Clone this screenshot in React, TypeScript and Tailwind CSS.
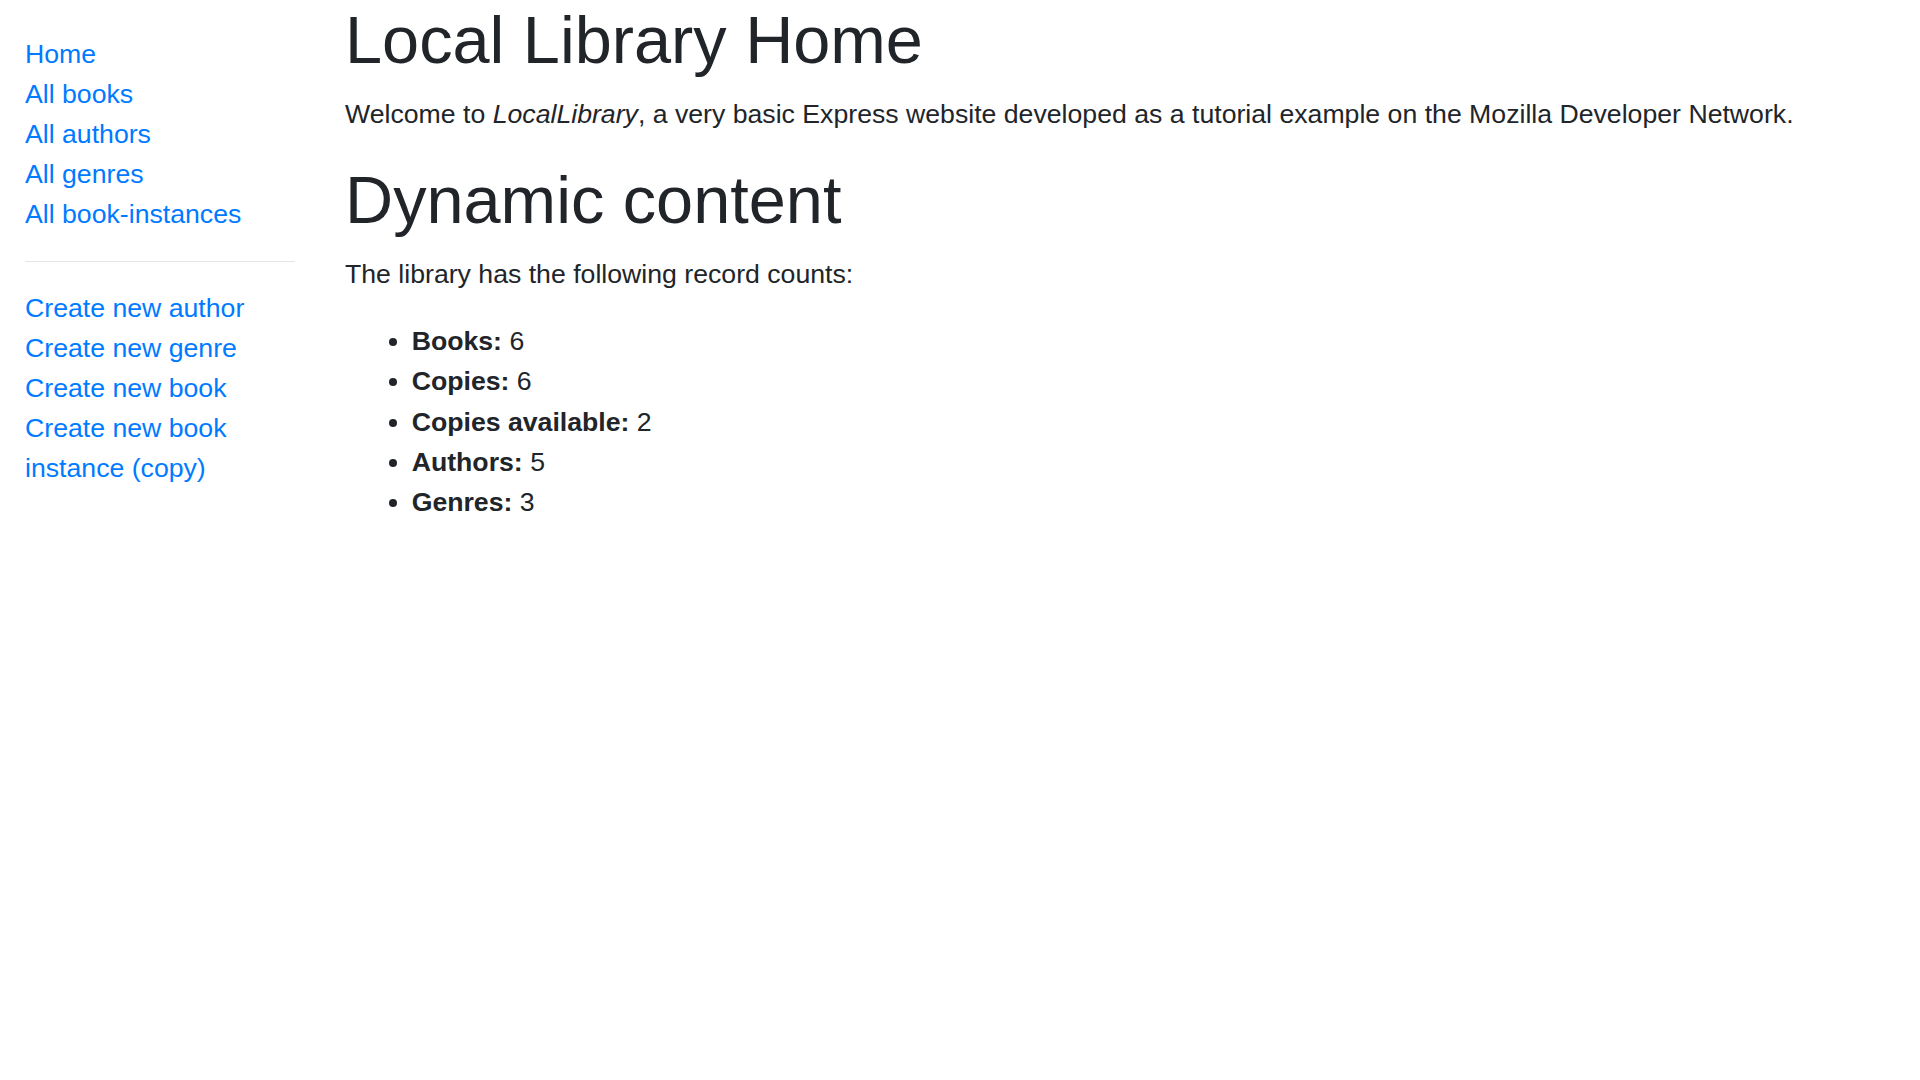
import React from "react";

const navTop = ["Home", "All books", "All authors", "All genres", "All book-instances"];
const navBottom = ["Create new author", "Create new genre", "Create new book", "Create new book instance (copy)"];
const counts: [string, number][] = [
  ["Books:", 6],
  ["Copies:", 6],
  ["Copies available:", 2],
  ["Authors:", 5],
  ["Genres:", 3],
];

export default function App() {
  return (
    <div className="min-h-[1080px] w-[1920px] bg-white text-[#212529] text-[26.67px] leading-[40px] font-['Liberation_Sans',Arial,sans-serif]">
      <div className="flex">
        <div className="w-[320px] shrink-0 px-[25px]">
          <ul className="mt-[34px] list-none p-0">
            {navTop.map((t) => (
              <li key={t}>
                <a href="#" className="text-[#007bff]">{t}</a>
              </li>
            ))}
            <li>
              <hr className="my-[26.67px] border-0 border-t-[1.67px] border-t-[rgba(0,0,0,0.1)]" />
            </li>
            {navBottom.map((t) => (
              <li key={t}>
                <a href="#" className="text-[#007bff]">{t}</a>
              </li>
            ))}
          </ul>
        </div>
        <div className="flex-1 px-[25px]">
          <h1 className="text-[66.67px] leading-[80px] font-medium mb-[13.33px]">Local Library Home</h1>
          <p className="mb-[26.67px] pt-[1px]">
            Welcome to <em>LocalLibrary</em>, a very basic Express website developed as a tutorial example on the Mozilla Developer Network.
          </p>
          <h1 className="text-[66.67px] leading-[80px] font-medium mb-[13.33px] -mt-[1px]">Dynamic content</h1>
          <p className="mb-[26.67px] pt-[1px]">The library has the following record counts:</p>
          <ul className="list-disc pl-[66.67px] mb-[26.67px]">
            {counts.map(([k, v]) => (
              <li key={k} className="leading-[40.35px]">
                <strong className="font-bold">{k}</strong> {v}
              </li>
            ))}
          </ul>
        </div>
      </div>
    </div>
  );
}
